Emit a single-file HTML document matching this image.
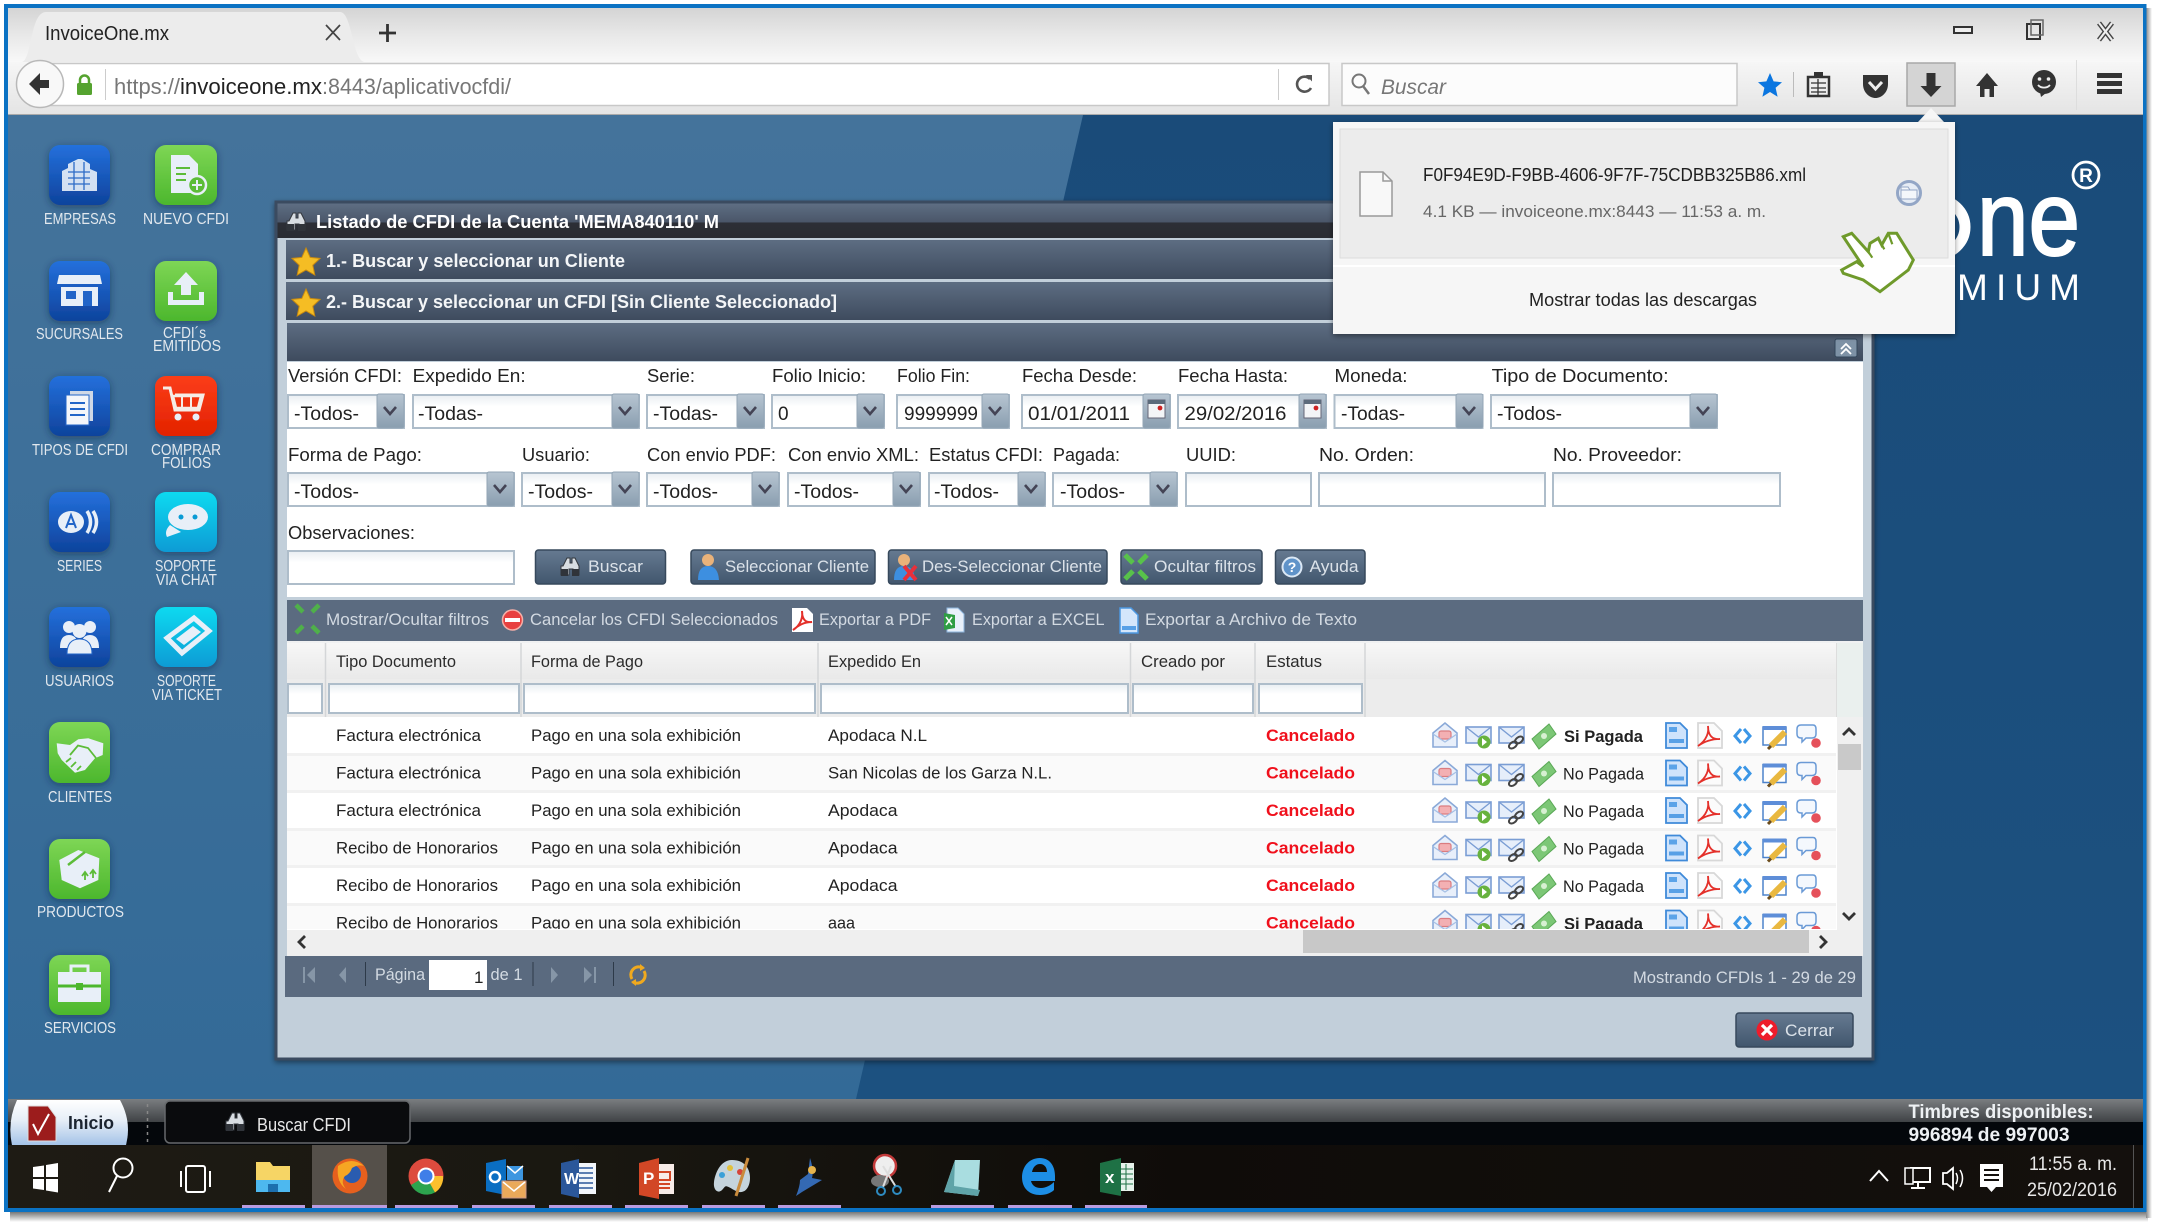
<!DOCTYPE html>
<html lang="es"><head><meta charset="utf-8"><title>InvoiceOne.mx</title>
<style>
html,body{margin:0;padding:0;background:#fff;width:2159px;height:1225px;overflow:hidden}
svg{display:block;font-family:"Liberation Sans",Arial,sans-serif}
.lb{font-size:18px;fill:#222}
.iv{font-size:19px;fill:#222}
.nm{font-size:16px;fill:#e2e8ee}
.tb{font-size:17px;fill:#d3dae2}
.bt{font-size:17px;fill:#dbe2e9}
.hd{font-size:17px;fill:#2b2b2b}
.rw{font-size:17px;fill:#222}
.cn{font-size:17px;fill:#f0101c;font-weight:bold}
.i{fill:url(#gi);stroke:#aebdca;stroke-width:2}
.t{fill:url(#gt);stroke:#93a5b5;stroke-width:1}
.b{fill:url(#gb);stroke:#37495c;stroke-width:1.5}
</style></head><body>
<svg xmlns="http://www.w3.org/2000/svg" width="2159" height="1225" viewBox="0 0 2159 1225">
<defs>
<linearGradient id="gtab" x2="0" y2="1"><stop offset="0" stop-color="#d4d4d4"/><stop offset=".5" stop-color="#e8e8e8"/><stop offset="1" stop-color="#f8f8f8"/></linearGradient>
<linearGradient id="gnav" x2="0" y2="1"><stop offset="0" stop-color="#f6f6f6"/><stop offset="1" stop-color="#e4e4e4"/></linearGradient>
<linearGradient id="gtitle" x2="0" y2="1"><stop offset="0" stop-color="#5e6e83"/><stop offset=".54" stop-color="#4a5669"/><stop offset=".56" stop-color="#2c2f36"/><stop offset="1" stop-color="#2a2c32"/></linearGradient>
<linearGradient id="gpan" x2="0" y2="1"><stop offset="0" stop-color="#5d6d82"/><stop offset="1" stop-color="#3e4b5e"/></linearGradient>
<linearGradient id="gi" x2="0" y2="1"><stop offset="0" stop-color="#e9eef2"/><stop offset=".35" stop-color="#fff"/></linearGradient>
<linearGradient id="gt" x2="0" y2="1"><stop offset="0" stop-color="#b7c5d2"/><stop offset="1" stop-color="#8a9eb0"/></linearGradient>
<linearGradient id="gb" x2="0" y2="1"><stop offset="0" stop-color="#667a91"/><stop offset="1" stop-color="#41566d"/></linearGradient>
<linearGradient id="gh" x2="0" y2="1"><stop offset="0" stop-color="#f7f7f7"/><stop offset="1" stop-color="#e9e9e9"/></linearGradient>
<linearGradient id="gblue" x2="0" y2="1"><stop offset="0" stop-color="#2470dc"/><stop offset="1" stop-color="#0e439c"/></linearGradient>
<linearGradient id="ggreen" x2="0" y2="1"><stop offset="0" stop-color="#7ed655"/><stop offset="1" stop-color="#4cb72d"/></linearGradient>
<linearGradient id="gred" x2="0" y2="1"><stop offset="0" stop-color="#fb3d18"/><stop offset="1" stop-color="#e32200"/></linearGradient>
<linearGradient id="gcyan" x2="0" y2="1"><stop offset="0" stop-color="#0cdaf0"/><stop offset="1" stop-color="#0a9bd5"/></linearGradient>
<linearGradient id="gbar" x2="0" y2="1"><stop offset="0" stop-color="#7a7d80"/><stop offset="1" stop-color="#3f4245"/></linearGradient>
<linearGradient id="gini" x2="0" y2="1"><stop offset="0" stop-color="#fff"/><stop offset=".45" stop-color="#e6eef7"/><stop offset="1" stop-color="#a4c3e8"/></linearGradient>
<linearGradient id="gdesk" x2="0" y2="1"><stop offset="0" stop-color="#44739b"/><stop offset="1" stop-color="#336a97"/></linearGradient>
<linearGradient id="gdark" x2="0" y2="1"><stop offset="0" stop-color="#1a4b79"/><stop offset="1" stop-color="#1c5180"/></linearGradient>
<linearGradient id="gsh" x2="0" y2="1"><stop offset="0" stop-color="#777"/><stop offset="1" stop-color="#fff"/></linearGradient>
<linearGradient id="gsr" x2="1" y2="0"><stop offset="0" stop-color="#888"/><stop offset="1" stop-color="#fff"/></linearGradient>
<linearGradient id="gwt" x2="1" y2="0"><stop offset="0" stop-color="#1e1b14"/><stop offset=".25" stop-color="#1a1811"/><stop offset=".55" stop-color="#0f0c09"/><stop offset="1" stop-color="#14100d"/></linearGradient>
<filter id="sd" x="-30%" y="-30%" width="160%" height="160%"><feDropShadow dx="0" dy="2" stdDeviation="4" flood-color="#0a2a48" flood-opacity=".55"/></filter>
<filter id="sp" x="-5%" y="-5%" width="110%" height="110%"><feDropShadow dx="0" dy="2" stdDeviation="3" flood-color="#000" flood-opacity=".45"/></filter>
<clipPath id="crow"><rect x="287" y="717" width="1550" height="212"/></clipPath>
<clipPath id="c9"><rect x="900" y="394" width="80" height="34"/></clipPath>
<g id="cv"><path d="M0 0l6 7 6-7" fill="none" stroke="#445" stroke-width="2.6"/></g>
<g id="cal"><rect x="0" y="0" width="17" height="18" fill="#f3f5f7" stroke="#667" stroke-width="1"/><rect x="0" y="0" width="17" height="4" fill="#5c6b7b"/><circle cx="12" cy="8" r="2.4" fill="#c22"/></g>
<g id="bin"><path d="M3 9L7 1h3v5h2V1h3l4 8v9h-6v-6h-4v6H1V9z" fill="#d8dde2" stroke="#33373d" stroke-width="1"/><rect x="1" y="12" width="7" height="7" fill="#30343a"/><rect x="12" y="12" width="7" height="7" fill="#30343a"/></g>
<g id="star"><path d="M0-14L4.2-4.6 14-3.6 6.8 3.2 8.8 13 0 8 -8.8 13-6.8 3.2-14-3.6-4.2-4.6Z" fill="#f5bd24" stroke="#c88a10" stroke-width="1"/></g>
<g id="ri">
 <path d="M1433 733L1445 723 1457 733V747H1433Z" fill="#e8effa" stroke="#8aa9d8" stroke-width="1.6"/><rect x="1439" y="731" width="12" height="8" rx="2" fill="#f3b0b3" stroke="#da7c80" stroke-width="1.2"/><path d="M1433 734l12 8 12-8" fill="none" stroke="#a4bfe5" stroke-width="1.2"/>
 <rect x="1466" y="727" width="25" height="16" fill="#e6eefa" stroke="#7a9dd4" stroke-width="1.6"/><path d="M1466 727l12.500 10 12.500-10" fill="none" stroke="#7a9dd4" stroke-width="1.400"/><circle cx="1484" cy="742" r="6.500" fill="#67b23d"/><path d="M1482 738v8l5-4z" fill="#fff"/>
 <rect x="1499" y="727" width="25" height="16" fill="#e6eefa" stroke="#7a9dd4" stroke-width="1.6"/><path d="M1499 727l12.500 10 12.500-10" fill="none" stroke="#7a9dd4" stroke-width="1.400"/><ellipse cx="1513" cy="745" rx="4.500" ry="2.800" fill="none" stroke="#444" stroke-width="2" transform="rotate(-35 1513 745)"/><ellipse cx="1519" cy="740" rx="4.500" ry="2.800" fill="none" stroke="#444" stroke-width="2" transform="rotate(-35 1519 740)"/>
 <path d="M1532 739L1549 724 1556 734 1539 749Z" fill="#7cc776" stroke="#59a855" stroke-width="1"/><circle cx="1544" cy="736" r="3" fill="#d7f0d2"/>
 <path d="M1666 723H1680L1687 730V748H1666Z" fill="#cfe3fb" stroke="#3f8ad9" stroke-width="1.800"/><rect x="1669" y="727" width="8" height="5" fill="#5ba3e8"/><rect x="1669" y="739" width="15" height="4" fill="#58a0e6"/>
 <path d="M1698 723H1714L1722 731V748H1698Z" fill="#fbfbfb" stroke="#d8d8d8" stroke-width="1.800"/><path d="M1698 746C1707 740 1709 732 1708 726 1708 735 1712 740 1720 739 1712 739 1705 741 1698 746Z" fill="none" stroke="#e4302a" stroke-width="1.800"/>
 <path d="M1741 729l-6 7 6 7M1744 729l6 7-6 7" fill="none" stroke="#3b96e6" stroke-width="3"/>
 <rect x="1763" y="727" width="23" height="18" fill="#fff" stroke="#4d83cb" stroke-width="1.500"/><rect x="1763" y="726" width="23" height="4" fill="#5e8ed8"/><path d="M1771 746l14-14" stroke="#e9b840" stroke-width="6"/><path d="M1768 749l3-3" stroke="#6b4c1c" stroke-width="3"/>
 <path d="M1801 725H1813Q1816 725 1816 729V734Q1816 738 1812 738H1806L1802 742V738H1801Q1797 738 1797 734V729Q1797 725 1801 725Z" fill="#f4f8fd" stroke="#6a9ad6" stroke-width="1.500"/><circle cx="1816" cy="743" r="4.800" fill="#e5505a"/>
</g>
</defs>

<rect width="2159" height="1225" fill="#fff"/>
<rect x="10" y="1212" width="2138" height="10" fill="url(#gsh)"/>
<rect x="2146" y="8" width="6" height="1210" fill="url(#gsr)"/>
<rect x="4" y="4" width="2142.500" height="1208" fill="#0b72c3"/>

<!-- browser chrome -->
<rect x="8" y="8" width="2135" height="54" fill="url(#gtab)"/>
<rect x="8" y="62" width="2135" height="53" fill="url(#gnav)"/>
<rect x="8" y="114" width="2135" height="1.500" fill="#aaa"/>
<path d="M22 62C32 60 30 12 46 12H340C352 12 352 58 364 62Z" fill="#ececec"/>
<text x="45" y="40" font-size="20" fill="#222" textLength="124" lengthAdjust="spacingAndGlyphs">InvoiceOne.mx</text>
<path d="M326 25l14 15M340 25l-14 15" stroke="#444" stroke-width="1.700"/>
<path d="M379 33h17M387.500 24v18" stroke="#333" stroke-width="2.800"/>
<rect x="1954" y="27" width="18" height="6" fill="#eee" stroke="#333" stroke-width="2"/>
<rect x="2027" y="24" width="13" height="15" fill="none" stroke="#333" stroke-width="2"/><rect x="2031" y="20" width="12" height="15" fill="none" stroke="#666" stroke-width="1.500"/>
<path d="M2099 23l13 17M2112 23l-13 17" stroke="#444" stroke-width="5"/><path d="M2099 23l13 17M2112 23l-13 17" stroke="#eee" stroke-width="2.200"/>

<rect x="30" y="63.500" width="1299" height="42" fill="#fff" stroke="#c8c8c8" stroke-width="1.500"/>
<circle cx="40" cy="84" r="23.500" fill="#f8f8f8" stroke="#b8b8b8" stroke-width="1.500"/>
<path d="M29 84l11-11v7h9v8h-9v7z" fill="#333"/>
<rect x="77" y="83" width="15" height="12" rx="1.500" fill="#55a32f"/><path d="M80 84v-4a4.500 4.500 0 0 1 9 0v4" fill="none" stroke="#55a32f" stroke-width="2.500"/>
<rect x="105" y="69" width="1" height="31" fill="#ccc"/>
<text x="114" y="94" font-size="22" fill="#777" textLength="66" lengthAdjust="spacingAndGlyphs">https://</text>
<text x="180" y="94" font-size="22" fill="#222" textLength="142" lengthAdjust="spacingAndGlyphs">invoiceone.mx</text>
<text x="322" y="94" font-size="22" fill="#777" textLength="189" lengthAdjust="spacingAndGlyphs">:8443/aplicativocfdi/</text>
<rect x="1278" y="69" width="1" height="31" fill="#ccc"/>
<path d="M1310 79a7.500 7.500 0 1 0 1 9" fill="none" stroke="#555" stroke-width="2.600"/><path d="M1306 75l6 0 0 6.500z" fill="#555"/>
<rect x="1342" y="63.500" width="395" height="42" fill="#fcfcfc" stroke="#c8c8c8" stroke-width="1.500"/>
<circle cx="1359" cy="81" r="6.500" fill="none" stroke="#777" stroke-width="2"/><path d="M1363 86l6 8" stroke="#777" stroke-width="2.500"/>
<text x="1381" y="94" font-size="21" font-style="italic" fill="#777" textLength="65" lengthAdjust="spacingAndGlyphs">Buscar</text>
<g transform="translate(-3)">
<path d="M1773 73l3.600 8.400 8.400.800-6.400 5.600 2 9-7.600-4.800-7.600 4.800 2-9-6.400-5.600 8.400-.800z" fill="#0b76e0"/>
<rect x="1796" y="72" width="1" height="25" fill="#bbb"/>
<path d="M1811 77h21v19h-21z" fill="#eee" stroke="#333" stroke-width="2.500"/><rect x="1817" y="72" width="9" height="6" fill="#333"/><path d="M1814 83h15M1814 88h15M1814 92h15M1821 79v16" stroke="#333" stroke-width="1.300"/>
<path d="M1866 75h25v9c0 9-7 14-12.500 14S1866 93 1866 84z" fill="#333"/><path d="M1872 82l6.500 7 6.500-7" fill="none" stroke="#eee" stroke-width="3"/>
<rect x="1910" y="63" width="48" height="43" fill="#d4d4d4" stroke="#a8a8a8" stroke-width="1.500"/>
<path d="M1929.500 73h9v13h6l-10.500 11-10.500-11h6z" fill="#333"/>
<path d="M1990 73l11 13h-4v11h-4.500v-8h-5v8H1983V86h-4z" fill="#333"/>
<circle cx="2047" cy="82" r="12" fill="#333"/><circle cx="2042.500" cy="79" r="1.800" fill="#eee"/><circle cx="2051.500" cy="79" r="1.800" fill="#eee"/><path d="M2041 85c3 3.500 9 3.500 12 0" fill="none" stroke="#eee" stroke-width="1.800"/><path d="M2043 92l1 5 5-4z" fill="#333"/>
<rect x="2079" y="60" width="1" height="50" fill="#ddd"/>
<path d="M2100 73h25v5h-25zM2100 81h25v5h-25zM2100 89h25v5h-25z" fill="#333"/>
</g>

<!-- desktop -->
<rect x="8" y="115" width="2135" height="984" fill="url(#gdesk)"/>
<path d="M1083 115H2143V1099H856Z" fill="url(#gdark)"/>
<ellipse cx="1935" cy="227" rx="30" ry="28" fill="none" stroke="#fff" stroke-width="11"/>
<text x="1977" y="255" font-size="106" fill="#fff" stroke="#fff" stroke-width="2" textLength="103" lengthAdjust="spacingAndGlyphs">ne</text>
<text x="1950" y="300" font-size="37" fill="#fff" text-anchor="end" letter-spacing="7">PRE</text>
<text x="1957" y="300" font-size="37" fill="#fff" textLength="123" lengthAdjust="spacing">MIUM</text>
<circle cx="2086" cy="175" r="13" fill="none" stroke="#fff" stroke-width="2.800"/>
<text x="2086" y="182" font-size="19" font-weight="bold" fill="#fff" text-anchor="middle">R</text>

<!-- side icons -->
<g filter="url(#sd)">
<rect x="49" y="145" width="61" height="60" rx="11" fill="url(#gblue)"/>
<rect x="49" y="261" width="61" height="60" rx="11" fill="url(#gblue)"/>
<rect x="49" y="376" width="61" height="60" rx="11" fill="url(#gblue)"/>
<rect x="49" y="492" width="61" height="60" rx="11" fill="url(#gblue)"/>
<rect x="49" y="607" width="61" height="60" rx="11" fill="url(#gblue)"/>
<rect x="49" y="722" width="61" height="61" rx="11" fill="url(#ggreen)"/>
<rect x="49" y="839" width="61" height="60" rx="11" fill="url(#ggreen)"/>
<rect x="49" y="955" width="61" height="60" rx="11" fill="url(#ggreen)"/>
<rect x="155" y="145" width="62" height="60" rx="11" fill="url(#ggreen)"/>
<rect x="155" y="261" width="62" height="60" rx="11" fill="url(#ggreen)"/>
<rect x="155" y="376" width="62" height="60" rx="11" fill="url(#gred)"/>
<rect x="155" y="492" width="62" height="60" rx="11" fill="url(#gcyan)"/>
<rect x="155" y="607" width="62" height="60" rx="11" fill="url(#gcyan)"/>
</g>
<g fill="#e8eff8">
<path d="M62 191v-20l6-3v-4l10-5h4l8 5v5l7 3v19z" opacity=".9"/><path d="M68 172h22M68 178h22M68 184h22M74 162v28M84 162v28" stroke="#2c6ac6" stroke-width="1.300"/>
<path d="M59 275h41l2 9H57z"/><path d="M61 287h37v19H61z"/><rect x="66" y="291" width="10" height="8" fill="#2265c8"/><rect x="83" y="291" width="9" height="15" fill="#2265c8"/>
<rect x="70" y="391" width="23" height="30" fill="#cfd8e6"/><rect x="66" y="395" width="23" height="30" fill="#f4f6fa" stroke="#2265c8"/><path d="M70 403h15M70 409h15M70 415h15" stroke="#2265c8" stroke-width="2"/>
<ellipse cx="71" cy="522" rx="13" ry="11"/><path d="M66 528l5-13 5 13M68 524h6" fill="none" stroke="#2265c8" stroke-width="2"/><path d="M87 511q7 11 0 22M93 511q7 11 0 22" fill="none" stroke="#e8eff8" stroke-width="3.500"/>
<circle cx="69" cy="627" r="6"/><circle cx="90" cy="627" r="6"/><circle cx="79.500" cy="631" r="7"/><path d="M60 648q0-13 9-13t9 13zM81 648q0-13 9-13t9 13z"/><path d="M67 654q0-15 12.500-15T92 654z" stroke="#2265c8"/>
<path d="M56.700 743.300L70 745 78.300 739.300 88.300 738.300 103.300 743.300 102.700 755 95 758.300 85 770 75 772.700 61.700 760 57.700 753.300Z"/><path d="M70 755L78 745.500 88 748 96 758M66 762l5-4M71 767l5-5M77 770l4-4" fill="none" stroke="#5cbc38" stroke-width="1.800"/>
<path d="M59.300 860L78.300 850 99.300 858.300 98.300 880 80 888.300 61.700 880Z"/><path d="M68 865L85 852" fill="none" stroke="#5cbc38" stroke-width="2.500"/><path d="M85 880v-7M93 878v-7M82 876l3-4 3 4M90 874l3-4 3 4" fill="none" stroke="#5cbc38" stroke-width="1.800"/>
<path d="M58 972h43v30H58z"/><path d="M71 972v-6h17v6" fill="none" stroke="#e8eff8" stroke-width="3"/><path d="M58 986h43" stroke="#4cb72d" stroke-width="3"/><rect x="76" y="983" width="7" height="7" fill="#4cb72d"/>
<path d="M171 155h18l9 9v29h-27z"/><path d="M176 168h14M176 174h10M176 180h10" stroke="#5cbc38" stroke-width="2"/><circle cx="197" cy="185" r="9" fill="#5cbc38" stroke="#e8eff8" stroke-width="2.500"/><path d="M192 185h10M197 180v10" stroke="#e8eff8" stroke-width="2"/>
<path d="M186 272l12 13h-7v10h-10v-10h-7z"/><path d="M168 292v13h36v-13l-5 0v8h-26v-8z"/>
<path d="M163 388l7 0 5 22h24l4-15h-28" fill="none" stroke="#f5ece6" stroke-width="3"/><path d="M173 396h28l-3 12h-22z" fill="none" stroke="#f5ece6" stroke-width="2.500"/><path d="M182 396v12M191 396v12" stroke="#f5ece6" stroke-width="2"/><circle cx="178" cy="417" r="3.500"/><circle cx="196" cy="417" r="3.500"/>
<ellipse cx="188" cy="517" rx="20" ry="13"/><circle cx="181" cy="517" r="2.500" fill="#0a9bd5"/><circle cx="195" cy="517" r="2.500" fill="#0a9bd5"/><path d="M170 525q-6 6-3 12l14-5z"/>
<path d="M167 638l27-20 15 13-27 22z" fill="none" stroke="#e8eff8" stroke-width="5"/><path d="M176 639l17-13 8 6-17 13z"/>
</g>
<g class="nm" text-anchor="start">
<text x="44" y="224" class="nm" textLength="72" lengthAdjust="spacingAndGlyphs">EMPRESAS</text>
<text x="143" y="224" class="nm" textLength="86" lengthAdjust="spacingAndGlyphs">NUEVO CFDI</text>
<text x="36" y="339" class="nm" textLength="87" lengthAdjust="spacingAndGlyphs">SUCURSALES</text>
<text x="163" y="338" class="nm" textLength="43" lengthAdjust="spacingAndGlyphs">CFDI´s</text>
<text x="153" y="351" class="nm" textLength="68" lengthAdjust="spacingAndGlyphs">EMITIDOS</text>
<text x="32" y="455" class="nm" textLength="96" lengthAdjust="spacingAndGlyphs">TIPOS DE CFDI</text>
<text x="151" y="455" class="nm" textLength="70" lengthAdjust="spacingAndGlyphs">COMPRAR</text>
<text x="162" y="468" class="nm" textLength="49" lengthAdjust="spacingAndGlyphs">FOLIOS</text>
<text x="57" y="571" class="nm" textLength="45" lengthAdjust="spacingAndGlyphs">SERIES</text>
<text x="155" y="571" class="nm" textLength="61" lengthAdjust="spacingAndGlyphs">SOPORTE</text>
<text x="156" y="585" class="nm" textLength="61" lengthAdjust="spacingAndGlyphs">VIA CHAT</text>
<text x="45" y="686" class="nm" textLength="69" lengthAdjust="spacingAndGlyphs">USUARIOS</text>
<text x="157" y="686" class="nm" textLength="59" lengthAdjust="spacingAndGlyphs">SOPORTE</text>
<text x="152" y="700" class="nm" textLength="70" lengthAdjust="spacingAndGlyphs">VIA TICKET</text>
<text x="48" y="802" class="nm" textLength="64" lengthAdjust="spacingAndGlyphs">CLIENTES</text>
<text x="37" y="917" class="nm" textLength="87" lengthAdjust="spacingAndGlyphs">PRODUCTOS</text>
<text x="44" y="1033" class="nm" textLength="72" lengthAdjust="spacingAndGlyphs">SERVICIOS</text>
</g>

<!-- dialog -->
<rect x="276" y="202" width="1597" height="857" fill="#c2cfda" stroke="#3a4c60" stroke-width="3" filter="url(#sp)"/>
<rect x="277.500" y="203.500" width="1594" height="34.500" fill="url(#gtitle)"/>
<use href="#bin" x="286" y="212"/>
<text x="316" y="228" font-size="18" font-weight="bold" fill="#fff" textLength="403" lengthAdjust="spacingAndGlyphs">Listado de CFDI de la Cuenta 'MEMA840110' M</text>
<rect x="286" y="240" width="1577" height="39" fill="url(#gpan)"/>
<rect x="286" y="282" width="1577" height="38" fill="url(#gpan)"/>
<rect x="287" y="323" width="1576" height="38" fill="url(#gpan)"/>
<use href="#star" x="306" y="262"/><use href="#star" x="306" y="303"/>
<text x="326" y="267" font-size="18" font-weight="bold" fill="#f4f6f8" textLength="299" lengthAdjust="spacingAndGlyphs">1.- Buscar y seleccionar un Cliente</text>
<text x="326" y="308" font-size="18" font-weight="bold" fill="#f4f6f8" textLength="511" lengthAdjust="spacingAndGlyphs">2.- Buscar y seleccionar un CFDI [Sin Cliente Seleccionado]</text>
<rect x="1835" y="339" width="22" height="18" rx="2" fill="#7e92a6" stroke="#33465a"/><path d="M1841 349l5-5 5 5M1841 354l5-5 5 5" fill="none" stroke="#fff" stroke-width="1.800"/>
<rect x="287" y="362" width="1576" height="235" fill="#fff"/>

<!-- form -->
<text x="288" y="382" class="lb" textLength="114" lengthAdjust="spacingAndGlyphs">Versión CFDI:</text>
<text x="412.600" y="382" class="lb" textLength="113" lengthAdjust="spacingAndGlyphs">Expedido En:</text>
<text x="647" y="382" class="lb" textLength="48" lengthAdjust="spacingAndGlyphs">Serie:</text>
<text x="772" y="382" class="lb" textLength="94" lengthAdjust="spacingAndGlyphs">Folio Inicio:</text>
<text x="897" y="382" class="lb" textLength="73" lengthAdjust="spacingAndGlyphs">Folio Fin:</text>
<text x="1022" y="382" class="lb" textLength="115" lengthAdjust="spacingAndGlyphs">Fecha Desde:</text>
<text x="1178" y="382" class="lb" textLength="110" lengthAdjust="spacingAndGlyphs">Fecha Hasta:</text>
<text x="1334.500" y="382" class="lb" textLength="73" lengthAdjust="spacingAndGlyphs">Moneda:</text>
<text x="1491.600" y="382" class="lb" textLength="177" lengthAdjust="spacingAndGlyphs">Tipo de Documento:</text>

<rect class="i" x="288" y="395" width="116" height="33"/><rect class="t" x="377" y="394" width="27" height="34" rx="2"/><use href="#cv" x="384" y="407"/>
<rect class="i" x="413" y="395" width="226" height="33"/><rect class="t" x="612" y="394" width="27" height="34" rx="2"/><use href="#cv" x="619" y="407"/>
<rect class="i" x="647" y="395" width="117" height="33"/><rect class="t" x="737" y="394" width="27" height="34" rx="2"/><use href="#cv" x="744" y="407"/>
<rect class="i" x="772" y="395" width="112" height="33"/><rect class="t" x="857" y="394" width="27" height="34" rx="2"/><use href="#cv" x="864" y="407"/>
<rect class="i" x="897" y="395" width="112" height="33"/><rect class="t" x="982" y="394" width="27" height="34" rx="2"/><use href="#cv" x="989" y="407"/>
<rect class="i" x="1022" y="395" width="148" height="33"/><rect class="t" x="1143" y="394" width="27" height="34" rx="2"/><use href="#cal" x="1148" y="400"/>
<rect class="i" x="1178" y="395" width="148" height="33"/><rect class="t" x="1299" y="394" width="27" height="34" rx="2"/><use href="#cal" x="1304" y="400"/>
<rect class="i" x="1334.500" y="395" width="148" height="33"/><rect class="t" x="1456" y="394" width="27" height="34" rx="2"/><use href="#cv" x="1463" y="407"/>
<rect class="i" x="1491" y="395" width="226" height="33"/><rect class="t" x="1690" y="394" width="27" height="34" rx="2"/><use href="#cv" x="1697" y="407"/>

<text x="294" y="420" class="iv" textLength="65" lengthAdjust="spacingAndGlyphs">-Todos-</text>
<text x="418" y="420" class="iv" textLength="65" lengthAdjust="spacingAndGlyphs">-Todas-</text>
<text x="653" y="420" class="iv" textLength="65" lengthAdjust="spacingAndGlyphs">-Todas-</text>
<text x="778" y="420" class="iv">0</text>
<text x="904" y="420" class="iv" clip-path="url(#c9)">9999999</text>
<text x="1028" y="420" class="iv" textLength="102" lengthAdjust="spacingAndGlyphs">01/01/2011</text>
<text x="1184.500" y="420" class="iv" textLength="102" lengthAdjust="spacingAndGlyphs">29/02/2016</text>
<text x="1341" y="420" class="iv" textLength="64" lengthAdjust="spacingAndGlyphs">-Todas-</text>
<text x="1497" y="420" class="iv" textLength="65" lengthAdjust="spacingAndGlyphs">-Todos-</text>

<text x="288" y="461" class="lb" textLength="134" lengthAdjust="spacingAndGlyphs">Forma de Pago:</text>
<text x="522" y="461" class="lb" textLength="68" lengthAdjust="spacingAndGlyphs">Usuario:</text>
<text x="647" y="461" class="lb" textLength="129" lengthAdjust="spacingAndGlyphs">Con envio PDF:</text>
<text x="788" y="461" class="lb" textLength="131" lengthAdjust="spacingAndGlyphs">Con envio XML:</text>
<text x="929" y="461" class="lb" textLength="114" lengthAdjust="spacingAndGlyphs">Estatus CFDI:</text>
<text x="1053" y="461" class="lb" textLength="67" lengthAdjust="spacingAndGlyphs">Pagada:</text>
<text x="1186" y="461" class="lb" textLength="50" lengthAdjust="spacingAndGlyphs">UUID:</text>
<text x="1319" y="461" class="lb" textLength="95" lengthAdjust="spacingAndGlyphs">No. Orden:</text>
<text x="1553" y="461" class="lb" textLength="129" lengthAdjust="spacingAndGlyphs">No. Proveedor:</text>

<rect class="i" x="288" y="473" width="226" height="33"/><rect class="t" x="487" y="472" width="27" height="34" rx="2"/><use href="#cv" x="494" y="485"/>
<rect class="i" x="522" y="473" width="117" height="33"/><rect class="t" x="612" y="472" width="27" height="34" rx="2"/><use href="#cv" x="619" y="485"/>
<rect class="i" x="647" y="473" width="132" height="33"/><rect class="t" x="752" y="472" width="27" height="34" rx="2"/><use href="#cv" x="759" y="485"/>
<rect class="i" x="788" y="473" width="132" height="33"/><rect class="t" x="893" y="472" width="27" height="34" rx="2"/><use href="#cv" x="900" y="485"/>
<rect class="i" x="929" y="473" width="116" height="33"/><rect class="t" x="1018" y="472" width="27" height="34" rx="2"/><use href="#cv" x="1025" y="485"/>
<rect class="i" x="1053" y="473" width="124" height="33"/><rect class="t" x="1150" y="472" width="27" height="34" rx="2"/><use href="#cv" x="1157" y="485"/>
<rect class="i" x="1186" y="473" width="125" height="33"/>
<rect class="i" x="1319" y="473" width="226" height="33"/>
<rect class="i" x="1553" y="473" width="227" height="33"/>
<text x="294" y="498" class="iv" textLength="65" lengthAdjust="spacingAndGlyphs">-Todos-</text>
<text x="528" y="498" class="iv" textLength="65" lengthAdjust="spacingAndGlyphs">-Todos-</text>
<text x="653" y="498" class="iv" textLength="65" lengthAdjust="spacingAndGlyphs">-Todos-</text>
<text x="794" y="498" class="iv" textLength="65" lengthAdjust="spacingAndGlyphs">-Todos-</text>
<text x="934" y="498" class="iv" textLength="65" lengthAdjust="spacingAndGlyphs">-Todos-</text>
<text x="1060" y="498" class="iv" textLength="65" lengthAdjust="spacingAndGlyphs">-Todos-</text>

<text x="288" y="539" class="lb" textLength="127" lengthAdjust="spacingAndGlyphs">Observaciones:</text>
<rect class="i" x="288" y="551" width="226" height="33"/>

<rect class="b" x="535.500" y="550" width="130" height="34" rx="3"/><use href="#bin" x="560" y="557"/>
<text x="588" y="572" class="bt" textLength="55" lengthAdjust="spacingAndGlyphs">Buscar</text>
<rect class="b" x="691" y="550" width="184" height="34" rx="3"/>
<circle cx="708" cy="560" r="6" fill="#e9b27a"/><path d="M698 580q0-14 10-14t11 14z" fill="#3d8fe0"/>
<text x="725" y="572" class="bt" textLength="144" lengthAdjust="spacingAndGlyphs">Seleccionar Cliente</text>
<rect class="b" x="888.500" y="550" width="218.500" height="34" rx="3"/>
<circle cx="904" cy="560" r="6" fill="#e9b27a"/><path d="M894 580q0-14 10-14t11 14z" fill="#3d8fe0"/><path d="M904 566l12 14M916 566l-12 14" stroke="#e8303a" stroke-width="4"/>
<text x="922" y="572" class="bt" textLength="180" lengthAdjust="spacingAndGlyphs">Des-Seleccionar Cliente</text>
<rect class="b" x="1121" y="550" width="141" height="34" rx="3"/>
<path d="M1125 555l8 8M1147 555l-8 8M1125 579l8-8M1147 579l-8-8" stroke="#58c24a" stroke-width="5"/>
<text x="1154" y="572" class="bt" textLength="102" lengthAdjust="spacingAndGlyphs">Ocultar filtros</text>
<rect class="b" x="1275.500" y="550" width="89.500" height="34" rx="3"/>
<circle cx="1292" cy="567" r="9.500" fill="#5f93c9" stroke="#dbe8f5" stroke-width="2"/>
<text x="1292" y="572" font-size="14" font-weight="bold" fill="#fff" text-anchor="middle">?</text>
<text x="1309.500" y="572" class="bt" textLength="49" lengthAdjust="spacingAndGlyphs">Ayuda</text>

<!-- toolbar -->
<rect x="287" y="600" width="1576" height="41" fill="#5b6b80"/>
<path d="M296 605l7 7M319 605l-7 7M296 633l7-7M319 633l-7-7" stroke="#4fb04a" stroke-width="4.500"/>
<text x="326" y="625" class="tb" textLength="163" lengthAdjust="spacingAndGlyphs">Mostrar/Ocultar filtros</text>
<circle cx="512.500" cy="620" r="10" fill="#e8403f" stroke="#f6b0a8" stroke-width="1.500"/><rect x="505" y="618" width="15" height="4" fill="#fff"/>
<text x="530" y="625" class="tb" textLength="248" lengthAdjust="spacingAndGlyphs">Cancelar los CFDI Seleccionados</text>
<path d="M792 608h15l6 6v18h-21z" fill="#fff"/><path d="M793 630c8-5 10-13 9-19 0 9 4 12 10 11-8 0-13 3-19 8z" fill="none" stroke="#e4302a" stroke-width="2"/>
<text x="819" y="625" class="tb" textLength="112" lengthAdjust="spacingAndGlyphs">Exportar a PDF</text>
<path d="M947 608h11l6 6v18h-17z" fill="#e8f0fa" stroke="#8db4dc"/><path d="M944 613l11 2v13l-11 2z" fill="#2f9e44"/><path d="M946 617l6 8M952 617l-6 8" stroke="#fff" stroke-width="1.500"/>
<text x="972" y="625" class="tb" textLength="132.500" lengthAdjust="spacingAndGlyphs">Exportar a EXCEL</text>
<path d="M1120 608h11l7 7v18h-18z" fill="#d4e6fb" stroke="#4c97e0" stroke-width="1.500"/><rect x="1122" y="626" width="14" height="4" fill="#58a0e6"/>
<text x="1145" y="625" class="tb" textLength="212" lengthAdjust="spacingAndGlyphs">Exportar a Archivo de Texto</text>

<!-- grid -->
<rect x="287" y="641" width="1576" height="315" fill="#f0f1f2"/>
<rect x="287" y="643" width="1550" height="36" fill="url(#gh)"/>
<rect x="287" y="679" width="1550" height="38" fill="#ececec"/>
<path d="M325.500 643v74M521 643v74M818 643v74M1130.500 643v74M1255 643v74M1365 643v74" stroke="#d4d6d8" stroke-width="1.500"/>
<rect x="1837" y="643" width="26" height="74" fill="#eaf0ee"/>
<rect x="1836" y="643" width="1" height="74" fill="#ddd"/>
<text x="336" y="667" class="hd" textLength="120" lengthAdjust="spacingAndGlyphs">Tipo Documento</text>
<text x="531" y="667" class="hd" textLength="112" lengthAdjust="spacingAndGlyphs">Forma de Pago</text>
<text x="828" y="667" class="hd" textLength="93" lengthAdjust="spacingAndGlyphs">Expedido En</text>
<text x="1141" y="667" class="hd" textLength="84" lengthAdjust="spacingAndGlyphs">Creado por</text>
<text x="1266" y="667" class="hd" textLength="56" lengthAdjust="spacingAndGlyphs">Estatus</text>
<rect class="i" x="288" y="684" width="34" height="29"/>
<rect class="i" x="329" y="684" width="190" height="29"/>
<rect class="i" x="524" y="684" width="291" height="29"/>
<rect class="i" x="821" y="684" width="307" height="29"/>
<rect class="i" x="1133" y="684" width="120" height="29"/>
<rect class="i" x="1259" y="684" width="103" height="29"/>

<rect x="287" y="717" width="1576" height="239" fill="#fff"/>
<g clip-path="url(#crow)">
<rect x="287" y="753" width="1549" height="3" fill="#f1f1f1"/><rect x="287" y="756" width="1549" height="34" fill="#fafafa"/>
<rect x="287" y="790" width="1549" height="3" fill="#f1f1f1"/>
<rect x="287" y="828" width="1549" height="3" fill="#f1f1f1"/><rect x="287" y="831" width="1549" height="34" fill="#fafafa"/>
<rect x="287" y="865" width="1549" height="3" fill="#f1f1f1"/>
<rect x="287" y="903" width="1549" height="3" fill="#f1f1f1"/><rect x="287" y="906" width="1549" height="24" fill="#fafafa"/>

<text x="336" y="741" class="rw" textLength="145" lengthAdjust="spacingAndGlyphs">Factura electrónica</text>
<text x="531" y="741" class="rw" textLength="210" lengthAdjust="spacingAndGlyphs">Pago en una sola exhibición</text>
<text x="828" y="741" class="rw" textLength="99" lengthAdjust="spacingAndGlyphs">Apodaca N.L</text>
<text x="1266" y="741" class="cn" textLength="89" lengthAdjust="spacingAndGlyphs">Cancelado</text>

<text x="336" y="778.500" class="rw" textLength="145" lengthAdjust="spacingAndGlyphs">Factura electrónica</text>
<text x="531" y="778.500" class="rw" textLength="210" lengthAdjust="spacingAndGlyphs">Pago en una sola exhibición</text>
<text x="828" y="778.500" class="rw" textLength="224" lengthAdjust="spacingAndGlyphs">San Nicolas de los Garza N.L.</text>
<text x="1266" y="778.500" class="cn" textLength="89" lengthAdjust="spacingAndGlyphs">Cancelado</text>

<text x="336" y="816" class="rw" textLength="145" lengthAdjust="spacingAndGlyphs">Factura electrónica</text>
<text x="531" y="816" class="rw" textLength="210" lengthAdjust="spacingAndGlyphs">Pago en una sola exhibición</text>
<text x="828" y="816" class="rw" textLength="69.500" lengthAdjust="spacingAndGlyphs">Apodaca</text>
<text x="1266" y="816" class="cn" textLength="89" lengthAdjust="spacingAndGlyphs">Cancelado</text>

<text x="336" y="853.500" class="rw" textLength="162" lengthAdjust="spacingAndGlyphs">Recibo de Honorarios</text>
<text x="531" y="853.500" class="rw" textLength="210" lengthAdjust="spacingAndGlyphs">Pago en una sola exhibición</text>
<text x="828" y="853.500" class="rw" textLength="69.500" lengthAdjust="spacingAndGlyphs">Apodaca</text>
<text x="1266" y="853.500" class="cn" textLength="89" lengthAdjust="spacingAndGlyphs">Cancelado</text>

<text x="336" y="891" class="rw" textLength="162" lengthAdjust="spacingAndGlyphs">Recibo de Honorarios</text>
<text x="531" y="891" class="rw" textLength="210" lengthAdjust="spacingAndGlyphs">Pago en una sola exhibición</text>
<text x="828" y="891" class="rw" textLength="69.500" lengthAdjust="spacingAndGlyphs">Apodaca</text>
<text x="1266" y="891" class="cn" textLength="89" lengthAdjust="spacingAndGlyphs">Cancelado</text>

<text x="336" y="928.500" class="rw" textLength="162" lengthAdjust="spacingAndGlyphs">Recibo de Honorarios</text>
<text x="531" y="928.500" class="rw" textLength="210" lengthAdjust="spacingAndGlyphs">Pago en una sola exhibición</text>
<text x="828" y="928.500" class="rw" textLength="27" lengthAdjust="spacingAndGlyphs">aaa</text>
<text x="1266" y="928.500" class="cn" textLength="89" lengthAdjust="spacingAndGlyphs">Cancelado</text>

<use href="#ri"/><use href="#ri" y="37.500"/><use href="#ri" y="75"/><use href="#ri" y="112.500"/><use href="#ri" y="150"/><use href="#ri" y="187.500"/>

<text x="1564" y="742" class="rw" font-weight="bold" textLength="79" lengthAdjust="spacingAndGlyphs">Si Pagada</text>
<text x="1563" y="779.500" class="rw" textLength="81" lengthAdjust="spacingAndGlyphs">No Pagada</text>
<text x="1563" y="817" class="rw" textLength="81" lengthAdjust="spacingAndGlyphs">No Pagada</text>
<text x="1563" y="854.500" class="rw" textLength="81" lengthAdjust="spacingAndGlyphs">No Pagada</text>
<text x="1563" y="892" class="rw" textLength="81" lengthAdjust="spacingAndGlyphs">No Pagada</text>
<text x="1564" y="929.500" class="rw" font-weight="bold" textLength="79" lengthAdjust="spacingAndGlyphs">Si Pagada</text>
</g>
<rect x="1837" y="717" width="26" height="213" fill="#f0f0f0"/>
<rect x="1838" y="744" width="23" height="26" fill="#c9c9c9"/>
<path d="M1843 735l6-6 6 6M1843 913l6 6 6-6" fill="none" stroke="#333" stroke-width="2.800"/>
<rect x="287" y="930" width="1576" height="26" fill="#efefef"/>
<rect x="1303" y="930" width="506" height="23" fill="#c8c8c8"/>
<path d="M305 936l-6 6 6 6M1820 936l6 6-6 6" fill="none" stroke="#333" stroke-width="2.800"/>

<!-- pager -->
<rect x="285" y="956" width="1577" height="41" fill="#5a6a7f"/>
<g fill="#8696a7"><rect x="303" y="967" width="2" height="16"/><path d="M315 967v16l-8-8zM346 967v16l-7-8zM551 967v16l7-8zM584 967v16l8-8z"/><rect x="594" y="967" width="2" height="16"/></g>
<rect x="365" y="962" width="1" height="24" fill="#2d3a49"/><rect x="532.500" y="962" width="1" height="24" fill="#2d3a49"/><rect x="613" y="962" width="1" height="24" fill="#2d3a49"/>
<text x="375" y="980" class="tb" textLength="50" lengthAdjust="spacingAndGlyphs">Página</text>
<rect x="429" y="960" width="58" height="30" fill="#fff"/>
<text x="474" y="983" font-size="17" fill="#222">1</text>
<text x="490.500" y="980" class="tb" textLength="32" lengthAdjust="spacingAndGlyphs">de 1</text>
<path d="M632 979a8 8 0 0 1 11-11M644 971a8 8 0 0 1-11 11" fill="none" stroke="#f0a91e" stroke-width="3"/><path d="M640 964l5 4-5 3zM636 986l-5-4 5-3z" fill="#f0a91e"/>
<text x="1633" y="983" class="tb" textLength="223" lengthAdjust="spacingAndGlyphs">Mostrando CFDIs 1 - 29 de 29</text>

<rect class="b" x="1736" y="1013" width="117" height="34" rx="3"/>
<circle cx="1767" cy="1030" r="10.500" fill="#ee1c2b"/><path d="M1762 1025l10 10M1772 1025l-10 10" stroke="#fff" stroke-width="3.200"/>
<text x="1785" y="1036" class="bt" textLength="49" lengthAdjust="spacingAndGlyphs">Cerrar</text>

<!-- popup -->
<path d="M1918 122l13-14 13 14z" fill="#f6f6f6"/>
<rect x="1333" y="122" width="622" height="212" fill="#f6f6f6" filter="url(#sp)"/>
<rect x="1340" y="129" width="608" height="129" fill="#ececec" stroke="#dcdcdc"/>
<rect x="1333" y="265" width="622" height="2" fill="#fff"/>
<path d="M1360 172h23l9 9v35h-32z" fill="#f8f8f8" stroke="#999" stroke-width="1.500"/><path d="M1383 172v9h9" fill="none" stroke="#999" stroke-width="1.500"/>
<text x="1423" y="181" font-size="18" fill="#1f1f1f" textLength="383" lengthAdjust="spacingAndGlyphs">F0F94E9D-F9BB-4606-9F7F-75CDBB325B86.xml</text>
<text x="1423" y="217" font-size="16.500" fill="#666" textLength="343" lengthAdjust="spacingAndGlyphs">4.1 KB — invoiceone.mx:8443 — 11:53 a. m.</text>
<circle cx="1909" cy="193" r="11.500" fill="#e6ecf5" stroke="#93a6c6" stroke-width="3"/><path d="M1901 190h16v9h-16zM1901 190v-3h7l2 3" fill="#f4f7fb" stroke="#93a6c6" stroke-width="1"/>
<text x="1643" y="306" font-size="18" fill="#222" text-anchor="middle" textLength="228" lengthAdjust="spacingAndGlyphs">Mostrar todas las descargas</text>
<path d="M1843.300 236.700L1851.700 233.300 1868.300 251.700 1870 243.300 1878.300 238.300 1881.700 245 1888.300 233.300 1896.700 233.300 1913.300 260 1908.300 270 1880 291.700 1863.300 280 1843.300 273.300 1841.700 270 1856.700 261.700 1863.300 266.700Z" fill="#fff" stroke="#6f9a2b" stroke-width="3"/>
<path d="M1868.300 251.700l4 6M1878.300 238.300l6 11M1888.300 233.300l4 11" fill="none" stroke="#6f9a2b" stroke-width="2.200"/>

<!-- app bottom bar -->
<rect x="8" y="1099" width="2135" height="23" fill="url(#gbar)"/>
<rect x="8" y="1122" width="2135" height="23" fill="#04070b"/>
<path d="M12 1145Q7 1122 17 1100H120Q132 1122 126 1145Z" fill="url(#gini)"/>
<path d="M28 1106h20l8 11v24H28z" fill="#9c1c1c" stroke="#ddd"/><path d="M33 1124l5 10 11-20" fill="none" stroke="#fff" stroke-width="2"/>
<text x="68" y="1129" font-size="18" font-weight="bold" fill="#1b2430" textLength="46" lengthAdjust="spacingAndGlyphs">Inicio</text>
<path d="M147.500 1104v38" stroke="#888" stroke-width="1.500" stroke-dasharray="3 4"/>
<rect x="165" y="1101" width="245" height="42" rx="5" fill="#0a0b0d" stroke="#66696c" stroke-width="1.500"/>
<use href="#bin" x="225" y="1112"/>
<text x="257" y="1131" font-size="18" fill="#e8e8e8" textLength="94" lengthAdjust="spacingAndGlyphs">Buscar CFDI</text>
<text x="1908.500" y="1118" font-size="19" font-weight="bold" fill="#eef1f4" textLength="185" lengthAdjust="spacingAndGlyphs">Timbres disponibles:</text>
<text x="1908.500" y="1141" font-size="19" font-weight="bold" fill="#eef1f4" textLength="161" lengthAdjust="spacingAndGlyphs">996894 de 997003</text>

<!-- windows taskbar -->
<rect x="8" y="1145" width="2135" height="63" fill="url(#gwt)"/>
<rect x="312" y="1145" width="75" height="60" fill="#55504a"/>
<path d="M33 1167l11-1.500v11.500H33zM46 1165l12-2v14H46zM33 1179h11v11l-11-1.500zM46 1179h12v13.500l-12-2z" fill="#fff"/>
<circle cx="123" cy="1168" r="9.500" fill="none" stroke="#fff" stroke-width="2"/><path d="M117 1176l-8 16" stroke="#fff" stroke-width="2"/>
<rect x="186" y="1166" width="19" height="26" rx="2" fill="none" stroke="#fff" stroke-width="2"/><path d="M181 1171v16M210 1171v16" stroke="#fff" stroke-width="2"/>
<path d="M256 1162h14l3 4h17v26h-34z" fill="#f6d565"/><rect x="256" y="1180" width="34" height="12" fill="#4db8ef"/><path d="M268 1192v-8h10v8z" fill="#1c6fae"/>
<circle cx="350" cy="1176" r="17.500" fill="#e6601e"/><circle cx="352" cy="1174" r="9" fill="#2a5cb0"/><path d="M338 1166q14-10 26 0-6-2-12 2-2 6-7 8-5 6 1 13-10-7-8-23z" fill="#f6a623"/>
<circle cx="426" cy="1176" r="17.500" fill="#dd4b3e"/><path d="M426 1176l-15 9a17.500 17.500 0 0 0 24 7.500z" fill="#2da44e"/><path d="M426 1176h17a17.500 17.500 0 0 1-8 16.500z" fill="#fbc02d"/><circle cx="426" cy="1176" r="7.500" fill="#3f7ee8" stroke="#fff" stroke-width="2"/>
<path d="M486 1163l20-4v36l-20-4z" fill="#0a6ec2"/><circle cx="495" cy="1177" r="5" fill="none" stroke="#fff" stroke-width="2.500"/><rect x="507" y="1166" width="16" height="14" fill="#3d96e0"/><path d="M507 1166l8 7 8-7" fill="none" stroke="#fff" stroke-width="1.500"/><rect x="502" y="1181" width="24" height="17" fill="#eaa95a" stroke="#c98" stroke-width="1"/><path d="M503 1182l11 9 11-9" fill="none" stroke="#fff" stroke-width="1.500"/>
<rect x="574" y="1163" width="22" height="31" fill="#f2f6fb"/><path d="M578 1168h15M578 1173h15M578 1178h15M578 1183h15M578 1188h15" stroke="#2b579a" stroke-width="1.500"/><path d="M561 1163l18-4v39l-18-4z" fill="#2b579a"/><text x="564" y="1184" font-size="16" font-weight="bold" fill="#fff">W</text>
<rect x="654" y="1164" width="20" height="30" fill="#f7ece8"/><path d="M657 1172h13v8h-13M657 1184h13M657 1188h13" fill="none" stroke="#d24726" stroke-width="2"/><path d="M639 1163l20-5v41l-20-4z" fill="#d24726"/><text x="643" y="1184" font-size="17" font-weight="bold" fill="#fff">P</text>
<path d="M732 1160c12 0 18 8 18 18s-6 18-16 12-8-4-12 0-9 0-8-8 6-22 18-22z" fill="#c5d4dc"/><circle cx="722" cy="1175" r="3" fill="#3aa0d8"/><circle cx="730" cy="1168" r="3" fill="#e2c13c"/><circle cx="740" cy="1172" r="3" fill="#d5453a"/><path d="M748 1158l-12 38" stroke="#c98b3d" stroke-width="3"/>
<path d="M810 1158q4 12 2 20l10 2-10 6-10 6-6 4q4-10 4-16l8-6z" fill="#3469b3"/><circle cx="812" cy="1170" r="4" fill="#e6b34c"/>
<circle cx="885" cy="1166" r="11" fill="#eee" stroke="#c23a3a" stroke-width="2.500"/><ellipse cx="880" cy="1181" rx="9" ry="6" fill="#777"/><path d="M883 1166l13 21M891 1166l-8 21" stroke="#ddd" stroke-width="2"/><circle cx="897" cy="1190" r="4" fill="none" stroke="#2e8bc0" stroke-width="2"/><circle cx="881" cy="1191" r="4" fill="none" stroke="#2e8bc0" stroke-width="2"/>
<path d="M955 1160h25l-2 36-34-4z" fill="#a9dde0"/><path d="M955 1160l-11 32 34 4 2-6-26-4z" fill="#5fa3a8"/>
<path d="M1040 1158c-12 0-18 10-18 19 0 12 8 18 18 18 6 0 11-2 14-5v-8c-3 3-8 6-13 6-6 0-9-3-10-7h24v-5c0-11-6-18-15-18zm-8 14c1-5 4-8 8-8s7 3 7 8z" fill="#1d8ee6"/>
<rect x="1118" y="1163" width="16" height="28" fill="#e7f3ec"/><path d="M1120 1169h13M1120 1174h13M1120 1179h13M1120 1184h13M1126 1164v26" stroke="#1e7145" stroke-width="1"/>
<path d="M1100 1163l21-5v38l-21-4z" fill="#1e7145"/><text x="1105" y="1183" font-size="17" font-weight="bold" fill="#fff">x</text>
<g fill="#b99be0"><rect x="242" y="1205" width="63" height="3"/><rect x="312" y="1205" width="75" height="3"/><rect x="395" y="1205" width="63" height="3"/><rect x="472" y="1205" width="63" height="3"/><rect x="549" y="1205" width="63" height="3"/><rect x="625" y="1205" width="63" height="3"/><rect x="702" y="1205" width="63" height="3"/><rect x="778" y="1205" width="63" height="3"/><rect x="931" y="1205" width="63" height="3"/><rect x="1008" y="1205" width="64" height="3"/><rect x="1085" y="1205" width="62" height="3"/></g>
<g transform="translate(-3)">
<path d="M1873 1181l9-10 9 10" fill="none" stroke="#fff" stroke-width="2"/>
<rect x="1914" y="1168" width="19" height="14" fill="none" stroke="#fff" stroke-width="2"/><rect x="1908" y="1168" width="8" height="16" fill="#14100d" stroke="#fff" stroke-width="1.500"/><path d="M1921 1182v6M1914 1188h14" stroke="#fff" stroke-width="2"/>
<path d="M1946 1173h4l6-5v21l-6-5h-4z" fill="none" stroke="#fff" stroke-width="1.800"/><path d="M1959 1173q3 5 0 11M1963 1170q5 8 0 17" fill="none" stroke="#fff" stroke-width="1.500"/>
<path d="M1983 1164h23v23h-7l-4.500 5-4.500-5h-7z" fill="#fff"/><path d="M1987 1170h15M1987 1175h15M1987 1180h15" stroke="#14100d" stroke-width="2"/>
</g>
<text x="2029" y="1170" font-size="19" fill="#e8e8e8" textLength="88" lengthAdjust="spacingAndGlyphs">11:55 a. m.</text>
<text x="2027" y="1196" font-size="19" fill="#e8e8e8" textLength="90" lengthAdjust="spacingAndGlyphs">25/02/2016</text>
<rect x="2133" y="1145" width="1" height="63" fill="#555"/>
</svg>
</body></html>
